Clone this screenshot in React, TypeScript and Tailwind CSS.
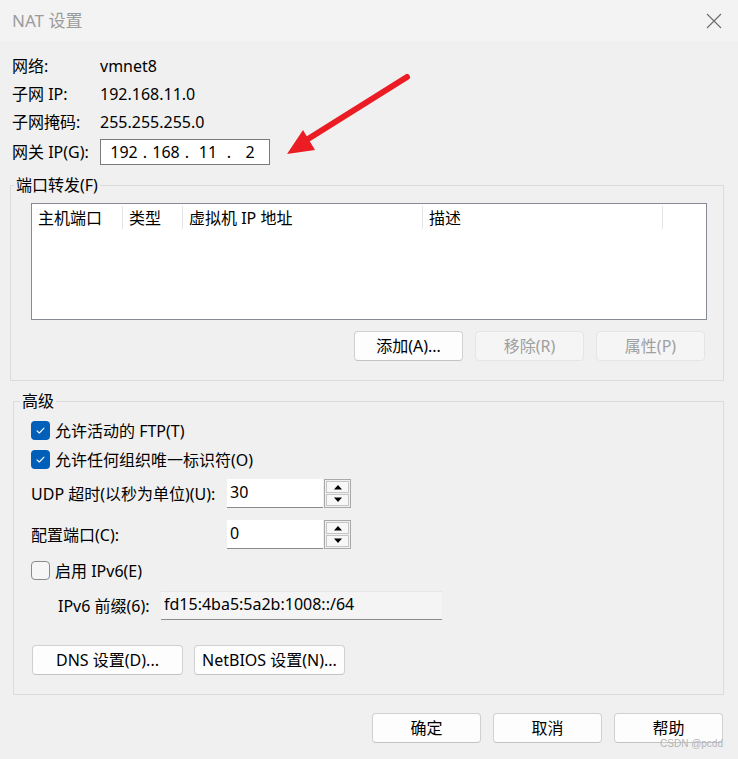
import React from 'react';

function Btn({ label, disabled, w = 'w-[109px]' }: { label: string; disabled?: boolean; w?: string }) {
  return (
    <div
      className={`${w} h-[30px] flex items-center justify-center rounded-[4px] border text-[16px] ${
        disabled
          ? 'bg-[#f5f5f5] border-[#e5e5e5] text-[#9f9f9f]'
          : 'bg-[#fdfdfd] border-[#d0d0d0] border-b-[#c4c4c4] text-black'
      }`}
    >
      {label}
    </div>
  );
}

function Check({ checked }: { checked?: boolean }) {
  if (!checked) {
    return <div className="w-[19px] h-[19px] rounded-[4px] border border-[#8b8b8b] bg-[#f6f6f6]" />;
  }
  return (
    <div className="w-[19px] h-[19px] rounded-[4px] bg-[#005fb8] flex items-center justify-center">
      <svg width="19" height="19" viewBox="0 0 19 19">
        <path d="M6 9.8 L8.3 12 L13 7.2" fill="none" stroke="#ffffff" strokeWidth="1.1" strokeLinecap="round" strokeLinejoin="round" />
      </svg>
    </div>
  );
}

function Spinner() {
  const tri = (up: boolean) => (
    <svg width="10" height="6" viewBox="0 0 10 6">
      <path d={up ? 'M1 5.5 L5 1 L9 5.5 Z' : 'M1 0.5 L5 5 L9 0.5 Z'} fill="#000" />
    </svg>
  );
  return (
    <div className="w-[27px] h-[29px] ml-px border border-[#a9a9a9] bg-[#f0f0f0] p-px flex flex-col gap-px">
      <div className="flex-1 border border-[#c6c6c6] bg-[#f7f7f7] flex items-center justify-center">{tri(true)}</div>
      <div className="flex-1 border border-[#c6c6c6] bg-[#f7f7f7] flex items-center justify-center">{tri(false)}</div>
    </div>
  );
}

function NumberField({ value }: { value: string }) {
  return (
    <div className="flex">
      <div className="w-[96px] h-[29px] bg-white border-b border-[#8a8a8a] pl-[3px] pb-[3px] flex items-center">{value}</div>
      <Spinner />
    </div>
  );
}

export default function App() {
  const info = [
    ['网络:', 'vmnet8'],
    ['子网 IP:', '192.168.11.0'],
    ['子网掩码:', '255.255.255.0'],
  ];
  const cols = [
    { name: '主机端口', w: 'w-[91px]' },
    { name: '类型', w: 'w-[60px]' },
    { name: '虚拟机 IP 地址', w: 'w-[240px]' },
    { name: '描述', w: 'w-[240px]' },
  ];

  return (
    <div className="w-[738px] h-[759px] bg-[#f0f0f0] relative overflow-hidden text-[16px] leading-[20px] text-black font-['Noto_Sans','Noto_Sans_CJK_SC',sans-serif]">
      {/* 标题栏 */}
      <div className="h-[41px] bg-[#f3f3f3] flex items-center justify-between pl-[12px] pr-[16px]">
        <span className="text-[17px] text-[#9b9b9b]">NAT 设置</span>
        <svg width="16" height="16" viewBox="0 0 16 16">
          <path d="M1 1 L15 15 M15 1 L1 15" stroke="#6a6a6a" strokeWidth="1.1" />
        </svg>
      </div>

      {/* 基本信息 */}
      <div className="pt-[11px] pl-[12px]">
        {info.map(([k, v]) => (
          <div key={k} className="h-[28px] flex items-center">
            <span className="w-[88px]">{k}</span>
            <span>{v}</span>
          </div>
        ))}
        <div className="h-[26px] mt-[3px] flex items-center">
          <span className="w-[88px]">网关 IP(G):</span>
          <div className="w-[170px] h-[26px] bg-white border border-[#7a7a7a] pl-[7px] flex items-center">
            <span className="w-[32px] text-center">192</span>
            <span className="w-[10px] text-center">.</span>
            <span className="w-[32px] text-center">168</span>
            <span className="w-[10px] text-center">.</span>
            <span className="w-[32px] text-center">11</span>
            <span className="w-[10px] text-center">.</span>
            <span className="w-[32px] text-center">2</span>
          </div>
        </div>
      </div>

      {/* 端口转发 */}
      <div className="relative mt-[20px] ml-[10px] w-[714px] h-[196px] border border-[#dcdcdc] pt-[17px] pl-[20px]">
        <span className="absolute left-[3px] -top-[11px] px-[2px] bg-[#f0f0f0]">端口转发(F)</span>
        <div className="w-[676px] h-[117px] bg-white border border-[#868a96]">
          <div className="h-[27px] flex items-center">
            {cols.map((c) => (
              <div key={c.name} className={`${c.w} h-full flex items-center`}>
                <span className="flex-1 pl-[6px]">{c.name}</span>
                <div className="w-px h-[23px] bg-[#e5e5e5]" />
              </div>
            ))}
          </div>
        </div>
        <div className="w-[676px] mt-[11px] pr-[2px] flex justify-end gap-[12px]">
          <Btn label="添加(A)..." />
          <Btn label="移除(R)" disabled />
          <Btn label="属性(P)" disabled />
        </div>
      </div>

      {/* 高级 */}
      <div className="relative mt-[20px] ml-[13px] w-[711px] h-[294px] border border-[#dcdcdc] pt-[14px] pl-[17px]">
        <span className="absolute left-[6px] -top-[11px] px-[2px] bg-[#f0f0f0]">高级</span>
        <div className="h-[29px] flex items-center gap-[5px]">
          <Check checked />
          <span>允许活动的 FTP(T)</span>
        </div>
        <div className="h-[29px] flex items-center gap-[5px]">
          <Check checked />
          <span>允许任何组织唯一标识符(O)</span>
        </div>
        <div className="mt-[5px] h-[29px] flex items-center">
          <span className="w-[196px]">UDP 超时(以秒为单位)(U):</span>
          <NumberField value="30" />
        </div>
        <div className="mt-[12px] h-[29px] flex items-center">
          <span className="w-[196px]">配置端口(C):</span>
          <NumberField value="0" />
        </div>
        <div className="mt-[7px] h-[29px] flex items-center gap-[5px]">
          <Check />
          <span>启用 IPv6(E)</span>
        </div>
        <div className="mt-[6px] h-[29px] flex items-center pl-[27px]">
          <span className="w-[103px]">IPv6 前缀(6):</span>
          <div className="w-[281px] h-[29px] bg-[#f4f4f4] border-t border-t-[#e6e6e6] border-b border-b-[#8c8c8c] pl-[3px] pb-[3px] flex items-center">
            fd15:4ba5:5a2b:1008::/64
          </div>
        </div>
        <div className="mt-[25px] ml-px flex gap-[11px]">
          <Btn label="DNS 设置(D)..." w="w-[151px]" />
          <Btn label="NetBIOS 设置(N)..." w="w-[151px]" />
        </div>
      </div>

      {/* 底部按钮 */}
      <div className="mt-[18px] pr-[15px] flex justify-end gap-[12px]">
        <Btn label="确定" />
        <Btn label="取消" />
        <Btn label="帮助" />
      </div>

      <span className="absolute right-[15px] top-[738px] text-[10px] leading-[12px] text-[#b4b4b4] font-['Liberation_Sans',sans-serif]">
        CSDN @pcdd
      </span>

      {/* 红色箭头标注 */}
      <svg className="absolute left-[280px] top-[65px]" width="140" height="100" viewBox="280 65 140 100">
        <path d="M407 77 L300 144" stroke="#ec1c24" strokeWidth="6" strokeLinecap="round" />
        <path d="M287 154 L303 130 L315 150 Z" fill="#ec1c24" />
      </svg>
    </div>
  );
}
